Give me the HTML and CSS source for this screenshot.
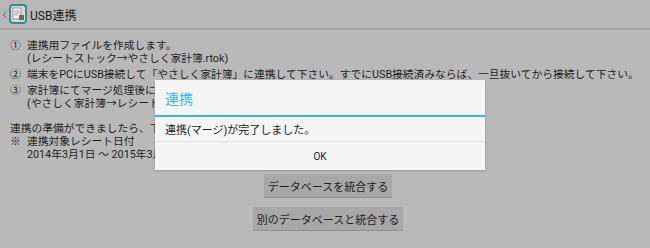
FILE: index.html
```html
<!DOCTYPE html>
<html lang="ja">
<head>
  <meta charset="UTF-8" />
  <meta name="viewport" content="width=device-width, initial-scale=1.0"/>
  <title>USB連携</title>
  <link rel="stylesheet" href="styles.css">
</head>
<body>

  <header class="action-bar">
    <span class="back">‹</span>
    <svg class="app-icon" width="18" height="20" viewBox="0 0 18 20">
      <rect x="1" y="1" width="16" height="18" rx="3" fill="#d8d8d8" stroke="#3f8c86" stroke-width="2"/>
      <rect x="4" y="4" width="8" height="11" fill="#f0f0f0" stroke="#8a8a8a" stroke-width="0.8"/>
      <path d="M5.5 7h5M5.5 9h5M5.5 11h3" stroke="#8a8a8a" stroke-width="0.8"/>
      <rect x="10" y="11" width="5" height="5" fill="#6a6a6a"/>
    </svg>
    <span class="title">USB連携</span>
  </header>

  <main class="content">
    <ol class="steps">
      <li><span class="num">①</span><span>連携用ファイルを作成します。<br>(レシートストック→やさしく家計簿.rtok)</span></li>
      <li><span class="num">②</span><span>端末をPCにUSB接続して「やさしく家計簿」に連携して下さい。すでにUSB接続済みならば、一旦抜いてから接続して下さい。</span></li>
      <li><span class="num">③</span><span>家計簿にてマージ処理後に連携用ファイルを再度読み込みます。<br>(やさしく家計簿→レシートストック.rtok)</span></li>
    </ol>

    <div class="note">
      <p>連携の準備ができましたら、下のボタンを押して下さい。</p>
      <p><span class="num">※</span>連携対象レシート日付</p>
      <p class="indent">2014年3月1日 ～ 2015年3月31日</p>
    </div>

    <div class="actions">
      <button class="btn">データベースを統合する</button>
      <button class="btn">別のデータベースと統合する</button>
    </div>
  </main>

  <div class="dialog">
    <div class="dialog-title">連携</div>
    <div class="dialog-message">連携(マージ)が完了しました。</div>
    <div class="dialog-button">OK</div>
  </div>

</body>
</html>
```

FILE: styles.css
```css
* {
  margin: 0;
  padding: 0;
  box-sizing: border-box;
  font-family: Roboto, "Noto Sans CJK JP", sans-serif;
}

body {
  width: 650px;
  height: 248px;
  background-color: #b9b9b9;
  color: #1e1e1e;
  position: relative;
  overflow: hidden;
}

.action-bar {
  height: 30px;
  display: flex;
  align-items: center;
  background-color: #b7b7b7;
  border-bottom: 2px solid #a3a3a3;
}

.back {
  color: #7a7a7a;
  font-size: 16px;
  width: 9px;
  padding-left: 2px;
  line-height: 1;
}

.app-icon {
  margin-right: 3px;
}

.title {
  font-size: 12px;
}

.content {
  padding: 9px 4px 0 10px;
  font-size: 10.75px;
  line-height: 13px;
}

.steps {
  list-style: none;
}

.steps li {
  display: flex;
  margin-bottom: 3px;
}

.num {
  width: 17px;
  flex-shrink: 0;
}

.note {
  margin-top: 12px;
}

.note p {
  display: flex;
}

.note .indent {
  padding-left: 17px;
}

.actions {
  display: flex;
  flex-direction: column;
  align-items: center;
  gap: 9px;
  margin-top: 13px;
}

.btn {
  font-size: 11px;
  height: 24px;
  padding: 0 4px;
  border: none;
  border-bottom: 1px solid #8f8f8f;
  background-color: #a8a8a8;
  color: #1e1e1e;
}

.dialog {
  position: absolute;
  left: 155px;
  top: 80px;
  width: 330px;
  background-color: #f5f5f5;
  box-shadow: 0 1px 2px rgba(0, 0, 0, 0.2);
}

.dialog-title {
  height: 37px;
  padding-left: 10px;
  display: flex;
  align-items: center;
  font-size: 14px;
  color: #33b5e5;
  border-bottom: 2px solid #33b5e5;
}

.dialog-message {
  height: 25px;
  padding-left: 10px;
  display: flex;
  align-items: center;
  font-size: 11px;
  color: #222;
  border-bottom: 1px solid #e2e2e2;
}

.dialog-button {
  height: 28px;
  display: flex;
  align-items: center;
  justify-content: center;
  font-size: 10px;
  color: #222;
}
```
